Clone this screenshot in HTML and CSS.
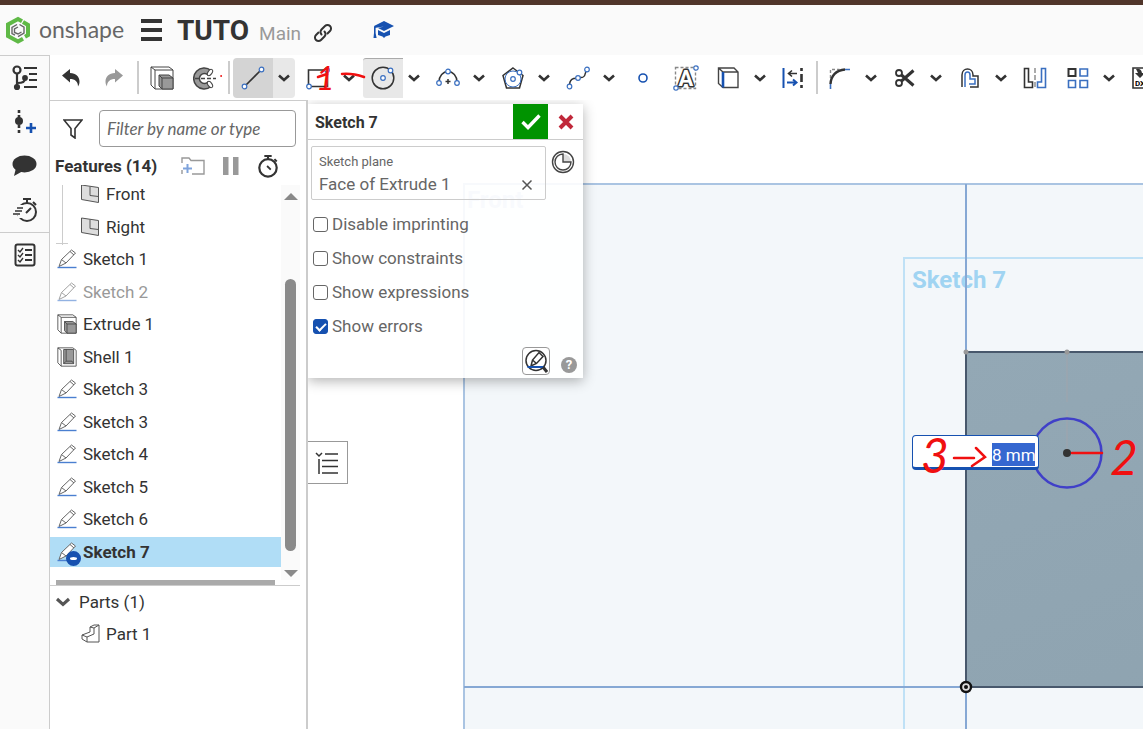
FILE: index.html
```html
<!DOCTYPE html>
<html lang="en">
<head>
    <meta charset="UTF-8">
    <meta name="viewport" content="width=device-width, initial-scale=1.0">
    <title>TUTO | Main</title>
    <link rel="stylesheet" href="styles.css">
</head>
<body>
<!-- shared icons -->
<svg class="defs" aria-hidden="true">
    <symbol id="caret" viewBox="0 0 14 10"><path d="M2 2.500l5 4.500 5-4.500" fill="none" stroke="currentColor" stroke-width="2.600"/></symbol>
    <symbol id="pencil" viewBox="0 0 20 20">
        <path d="M2 17.500l2.500-7L14.500 1l4 3L9 14z M4.500 10.500L9 14M13 2.500l4 3.500" fill="#fff" stroke="#666"/>
        <path d="M0.500 18.500h19" stroke="#4a7fd0" stroke-width="1.400"/>
    </symbol>
    <symbol id="plane" viewBox="0 0 20 20">
        <path d="M1.500 1l17 2.500v15l-17-3z" fill="#ddd" stroke="#555"/>
        <path d="M10 2.500v9l8.500 1" fill="none" stroke="#555"/>
    </symbol>
    <symbol id="cube" viewBox="0 0 24 24">
        <path d="M1 1h18l4 3v19H5l-4-4z" fill="#fff" stroke="#444"/>
        <path d="M1 1l4 3h18M5 4v19" fill="none" stroke="#444"/>
        <path d="M9 9h10l4 3v11H12l-3-3z" fill="#999" stroke="#444"/>
        <path d="M9 9l3 3h11M12 12v11" fill="none" stroke="#444"/>
    </symbol>
    <symbol id="shell" viewBox="0 0 24 24">
        <path d="M1 1h18l4 3v19H5l-4-4z" fill="#fff" stroke="#444"/>
        <path d="M1 1l4 3v19" fill="none" stroke="#444"/>
        <path d="M8 3h12v17H8z" fill="#999" stroke="#444"/>
        <path d="M8 20l3-3h7l2 3M11 17V3" fill="none" stroke="#444"/>
    </symbol>
    <symbol id="stopwatch" viewBox="0 0 24 26">
        <circle cx="12" cy="15" r="9.500" fill="none" stroke="currentColor" stroke-width="2.400"/>
        <path d="M8 2h8M12 2v4M19 5.500l2.500 2.500" stroke="currentColor" stroke-width="2.200"/>
    </symbol>
</svg>

<div class="app">
    <header class="header">
        <a class="logo" href="#">
            <svg width="26" height="28" viewBox="0 0 26 28">
                <path d="M3 14V8.500L13 3l4 2.300" fill="none" stroke="#5fb946" stroke-width="4"/>
                <path d="M18 6l5 3v10l-3 1.700" fill="none" stroke="#5fb946" stroke-width="4"/>
                <path d="M3 13v7l10 5.500 5-2.800" fill="none" stroke="#5fb946" stroke-width="4"/>
                <path d="M12 8.500l-5 3v6l3 1.700M14.500 8.500l4.500 2.700v6l-6 3.500M13 11l-3.500 2v3.500L13 18l3.500-2" fill="none" stroke="#666" stroke-width="1.400"/>
            </svg>
            <span>onshape</span>
        </a>
        <button class="icon-button menu" aria-label="Menu"><i></i><i></i><i></i></button>
        <h1>TUTO</h1>
        <span class="workspace">Main</span>
        <button class="icon-button link" aria-label="Copy link">
            <svg width="20" height="20" viewBox="0 0 20 20" fill="none" stroke="#333" stroke-width="2" stroke-linecap="round">
                <path d="M8.500 11.500a3.600 3.600 0 0 1 0-5L12 3a3.500 3.500 0 0 1 5 5l-2.500 2.500"/>
                <path d="M11.500 8.500a3.600 3.600 0 0 1 0 5L8 17a3.500 3.500 0 0 1-5-5l2.500-2.500"/>
            </svg>
        </button>
        <button class="icon-button learn" aria-label="Learning center">
            <svg width="22" height="19" viewBox="0 0 22 19" fill="#1651b0">
                <path d="M11 0l10 5-10 5-6-3 6-1.500L1.500 7 1 5z"/>
                <path d="M5 9l6 3 6-3v5c-2 1-4 .5-6 3-2-2.500-4-2-6-3z"/>
                <path d="M1 6h1.600v6l1 5H.5l.5-5z"/>
            </svg>
        </button>
    </header>

    <div class="workspace-area">
        <nav class="rail">
            <button class="icon-button" aria-label="Versions and history">
                <svg width="28" height="26" viewBox="0 0 28 26" fill="none" stroke="#333" stroke-width="2.200">
                    <circle cx="6" cy="5" r="3.500"/><path d="M6 9v13M6 18c6 0 8-1 8-5"/>
                    <circle cx="6" cy="22" r="2" fill="#333"/><circle cx="14" cy="13" r="1.800" fill="#333"/>
                    <path d="M13 3h13M18 9h8M18 15h8M13 22h13"/>
                </svg>
            </button>
            <button class="icon-button" aria-label="Insert">
                <svg width="28" height="26" viewBox="0 0 28 26">
                    <path d="M8 1v24" stroke="#333" stroke-width="2.600" stroke-dasharray="3 2"/>
                    <circle cx="8" cy="12" r="4" fill="#333"/>
                    <path d="M15 19h10M20 14v10" stroke="#1651b0" stroke-width="2.600"/>
                </svg>
            </button>
            <button class="icon-button" aria-label="Comments">
                <svg width="28" height="24" viewBox="0 0 28 24"><ellipse cx="13.500" cy="10" rx="12" ry="8.500" fill="#333"/><path d="M5 14l-2 8 9-5z" fill="#333"/></svg>
            </button>
            <button class="icon-button" aria-label="Performance">
                <svg width="28" height="26" viewBox="0 0 28 26" fill="none" stroke="#333" stroke-width="2">
                    <circle cx="16" cy="15" r="9" /><path d="M12 2h8M16 2v4M22 5l3 3M15 16l5-5"/>
                    <path d="M7 10h6M5 13h7M3 16h8M7 19h5" stroke="#fafafa" stroke-width="4"/>
                    <path d="M6 11h6M4 14h7M2 17h7" stroke-width="1.400"/>
                </svg>
            </button>
            <button class="icon-button last" aria-label="Properties">
                <svg width="22" height="24" viewBox="0 0 22 24" fill="none" stroke="#333" stroke-width="2">
                    <rect x="1.500" y="1.500" width="19" height="21" rx="2"/>
                    <path d="M11 7h7M11 12h7M11 17h7"/><path d="M4 7l2 2 3-4M4 12l2 2 3-4M4 17l2 2 3-4" stroke-width="1.400"/>
                </svg>
            </button>
        </nav>

        <div class="main">
            <div class="toolbar">
                <button class="tool" aria-label="Undo"><svg width="18" height="20" viewBox="0 0 18 20"><path d="M0 7.500L8 1v4c6 0 9.500 4 9.500 8.500 0 2-.5 3.500-1.500 5 0-5-3-7.500-8-7.500v3.500z" fill="#333"/></svg></button>
                <button class="tool" aria-label="Redo"><svg width="18" height="20" viewBox="0 0 18 20"><path d="M18 7.500L10 1v4C4 5 .5 9 .5 13.500c0 2 .5 3.500 1.500 5 0-5 3-7.500 8-7.500v3.500z" fill="#999"/></svg></button>
                <span class="sep"></span>
                <button class="tool" aria-label="Extrude"><svg width="24" height="24"><use href="#cube"/></svg></button>
                <button class="tool" aria-label="Revolve">
                    <svg width="24" height="24" viewBox="0 0 24 24">
                        <path d="M18 4.500A10.500 10.500 0 1 0 18 20.500l-3-4.500a5 5 0 1 1 0-7z" fill="#999" stroke="#444" stroke-width="1.500"/>
                        <ellipse cx="17" cy="6.500" rx="2" ry="3.500" transform="rotate(35 17 6.500)" fill="#fff" stroke="#444"/>
                        <ellipse cx="17" cy="18.500" rx="2" ry="3.500" transform="rotate(-35 17 18.500)" fill="#fff" stroke="#444"/>
                        <path d="M2 12.500h21" stroke="#444" stroke-width="1.500" stroke-dasharray="4 2"/>
                    </svg>
                </button>
                <span class="sep"></span>
                <div class="split active">
                    <button class="tool" aria-label="Line"><svg width="24" height="24" viewBox="0 0 24 24"><path d="M4 20L20 4" stroke="#333" stroke-width="1.600"/><g class="pts"><circle cx="3.500" cy="20.500" r="2.300"/><circle cx="20.500" cy="3.500" r="2.300"/></g></svg></button>
                    <button class="drop" aria-label="Line tools"><svg width="14" height="10"><use href="#caret"/></svg></button>
                </div>
                <div class="split">
                    <button class="tool" aria-label="Rectangle"><svg width="24" height="24" viewBox="0 0 24 24"><path d="M2.500 4h19v16.500h-19z" fill="none" stroke="#333" stroke-width="1.600"/><g class="pts"><circle cx="3" cy="20.500" r="2.300"/><circle cx="21" cy="4" r="2.300"/></g></svg></button>
                    <button class="drop" aria-label="Rectangle tools"><svg width="14" height="10"><use href="#caret"/></svg></button>
                </div>
                <div class="split">
                    <button class="tool pressed" aria-label="Circle"><svg width="24" height="24" viewBox="0 0 24 24"><circle cx="12" cy="12" r="10.800" fill="none" stroke="#333" stroke-width="1.500"/><g class="pts"><circle cx="12" cy="12" r="2.300"/><circle cx="19.500" cy="4.500" r="2.300"/></g></svg></button>
                    <button class="drop" aria-label="Circle tools"><svg width="14" height="10"><use href="#caret"/></svg></button>
                </div>
                <div class="split">
                    <button class="tool" aria-label="Arc"><svg width="24" height="24" viewBox="0 0 24 24"><path d="M3 16a9 10.500 0 0 1 18 0M9.500 15.500h5M12 13v5" fill="none" stroke="#333" stroke-width="1.500"/><g class="pts"><circle cx="3" cy="17" r="2.300"/><circle cx="12" cy="5.500" r="2.300"/><circle cx="21" cy="17" r="2.300"/></g></svg></button>
                    <button class="drop" aria-label="Arc tools"><svg width="14" height="10"><use href="#caret"/></svg></button>
                </div>
                <div class="split">
                    <button class="tool" aria-label="Polygon"><svg width="24" height="24" viewBox="0 0 24 24"><path d="M12 2l10 7.500L18.500 22h-13L2 9.500z" fill="none" stroke="#333" stroke-width="1.500"/><circle cx="12" cy="13" r="8" fill="none" stroke="#3a6fc0"/><g class="pts"><circle cx="12" cy="13" r="2.300"/><circle cx="18.500" cy="6.500" r="2.300"/></g></svg></button>
                    <button class="drop" aria-label="Polygon tools"><svg width="14" height="10"><use href="#caret"/></svg></button>
                </div>
                <div class="split">
                    <button class="tool" aria-label="Spline"><svg width="24" height="24" viewBox="0 0 24 24"><path d="M3.500 20C3.500 9 12 14 14 11.500 21 12 18 6 21 4" fill="none" stroke="#333" stroke-width="1.500"/><g class="pts"><circle cx="3.500" cy="20.500" r="2.300"/><circle cx="12" cy="12" r="2.300"/><circle cx="21" cy="3.500" r="2.300"/></g></svg></button>
                    <button class="drop" aria-label="Spline tools"><svg width="14" height="10"><use href="#caret"/></svg></button>
                </div>
                <button class="tool" aria-label="Point"><svg width="24" height="24" viewBox="0 0 24 24"><circle cx="12" cy="12" r="4" fill="none" stroke="#1651b0" stroke-width="1.600"/></svg></button>
                <button class="tool" aria-label="Text">
                    <svg width="26" height="26" viewBox="0 0 26 26">
                        <path d="M2.500 2.500h20v21h-20z" fill="none" stroke="#888" stroke-width="1.400" stroke-dasharray="3 2"/>
                        <text class="text-icon" x="13" y="21" text-anchor="middle">A</text>
                        <g class="pts"><circle cx="3" cy="23" r="2.200"/><circle cx="23" cy="3" r="2.200"/></g>
                    </svg>
                </button>
                <div class="split">
                    <button class="tool" aria-label="Use"><svg width="24" height="24" viewBox="0 0 24 24"><path d="M1.500 2h15.500l4 4v15.500h-15l-4.500-4z M1.500 2l4.500 4h15" fill="none" stroke="#444" stroke-width="1.400"/><path d="M6 6v15.500" stroke="#1651b0" stroke-width="2.600"/></svg></button>
                    <button class="drop" aria-label="Use tools"><svg width="14" height="10"><use href="#caret"/></svg></button>
                </div>
                <button class="tool" aria-label="Dimension"><svg width="24" height="24" viewBox="0 0 24 24" fill="none"><path d="M1.500 2v20M5 16.500h9M11 13.500l3.500 3-3.500 3" stroke="#1651b0" stroke-width="2"/><path d="M19.500 2v3M19.500 8v8M19.500 19v3" stroke="#333" stroke-width="2.600"/><path d="M15 7.500H7M10 4.500l-3.500 3 3.500 3" stroke="#333" stroke-width="1.600"/></svg></button>
                <span class="sep tight"></span>
                <div class="split">
                    <button class="tool" aria-label="Fillet"><svg width="24" height="24" viewBox="0 0 24 24" fill="none"><path d="M2.500 12V3.500h9" stroke="#888" stroke-width="1.400" stroke-dasharray="3 2"/><path d="M2.500 18C3 10 8 4 17 3.500" stroke="#333" stroke-width="2.400"/><path d="M2.500 18v5M17 3.500h5" stroke="#3a6fc0" stroke-width="1.600"/></svg></button>
                    <button class="drop" aria-label="Fillet tools"><svg width="14" height="10"><use href="#caret"/></svg></button>
                </div>
                <div class="split">
                    <button class="tool" aria-label="Trim"><svg width="24" height="24" viewBox="0 0 24 24" fill="none" stroke="#333"><circle cx="6" cy="7" r="3" stroke-width="1.800"/><circle cx="6" cy="17" r="3" stroke-width="1.800"/><path d="M8.500 9l12 10.500M8.500 15L20.500 4.500" stroke-width="3"/></svg></button>
                    <button class="drop" aria-label="Trim tools"><svg width="14" height="10"><use href="#caret"/></svg></button>
                </div>
                <div class="split">
                    <button class="tool" aria-label="Offset"><svg width="24" height="24" viewBox="0 0 24 24" fill="none"><path d="M4 21V9c0-8 11-8 11 0v1h5v11h-8" stroke="#333" stroke-width="1.500"/><path d="M7 21V9c0-4 5-4 5 0v4h5v5h-6" stroke="#3a6fc0" stroke-width="1.500"/></svg></button>
                    <button class="drop" aria-label="Offset tools"><svg width="14" height="10"><use href="#caret"/></svg></button>
                </div>
                <button class="tool" aria-label="Mirror"><svg width="26" height="24" viewBox="0 0 26 24" fill="none"><path d="M2.500 2.500h4V16h4v5.500h-8z" stroke="#333" stroke-width="1.600"/><path d="M23.500 2.500h-4V16h-4v5.500h8z" stroke="#3a6fc0" stroke-width="1.600"/><path d="M13 2v21" stroke="#888" stroke-width="1.400" stroke-dasharray="5 2"/></svg></button>
                <div class="split">
                    <button class="tool" aria-label="Pattern"><svg width="24" height="24" viewBox="0 0 24 24" fill="none" stroke="#3a6fc0" stroke-width="1.600"><path d="M2.500 3h7v7h-7z" stroke="#333" stroke-width="2"/><path d="M14 3h7.500v7H14zM14 14.500h7.500v7H14zM2.500 14.500h7v7h-7z"/></svg></button>
                    <button class="drop" aria-label="Pattern tools"><svg width="14" height="10"><use href="#caret"/></svg></button>
                </div>
                <button class="tool" aria-label="Insert DXF"><svg width="24" height="24" viewBox="0 0 24 24"><path d="M2 22V2h12l8 7v13z" fill="#fff" stroke="#333" stroke-width="1.600"/><path d="M5 3q5-1 6 4h3l-5 5-5-5h3z" fill="#333"/><text class="dxf-icon" x="4" y="20">DXF</text></svg></button>
            </div>

            <div class="content">
                <aside class="features">
                    <div class="filter">
                        <button class="icon-button" aria-label="Filter"><svg width="20" height="20" viewBox="0 0 20 20"><path d="M1 1h18l-7 8.500V19l-4-3V9.500z" fill="none" stroke="#333" stroke-width="1.600"/></svg></button>
                        <input type="text" placeholder="Filter by name or type" aria-label="Filter by name or type">
                    </div>
                    <div class="features-head">
                        <h2>Features (14)</h2>
                        <button class="icon-button" aria-label="New folder"><svg width="24" height="20" viewBox="0 0 24 20"><path d="M1 7V2h7l2 2.500h13V18H11M1 14v4" fill="none" stroke="#999" stroke-width="1.400"/><path d="M2 12.500h9M6.500 8v9" stroke="#7fa3dc" stroke-width="2"/></svg></button>
                        <button class="icon-button" aria-label="Pause"><svg width="16" height="18" viewBox="0 0 16 18"><path d="M0 0h5.500v18H0zM10 0h5.500v18H10z" fill="#999"/></svg></button>
                        <button class="icon-button" aria-label="Rebuild times"><svg width="22" height="24" viewBox="0 0 24 26"><use href="#stopwatch"/><path d="M11 13l4 4" stroke="#333" stroke-width="2"/></svg></button>
                    </div>
                    <div class="scroll-area">
                        <ul class="tree">
                            <li class="child"><svg><use href="#plane"/></svg>Front</li>
                            <li class="child end"><svg><use href="#plane"/></svg>Right</li>
                            <li><svg><use href="#pencil"/></svg>Sketch 1</li>
                            <li class="hidden-item"><svg><use href="#pencil"/></svg>Sketch 2</li>
                            <li><svg><use href="#cube"/></svg>Extrude 1</li>
                            <li><svg><use href="#shell"/></svg>Shell 1</li>
                            <li><svg><use href="#pencil"/></svg>Sketch 3</li>
                            <li><svg><use href="#pencil"/></svg>Sketch 3</li>
                            <li><svg><use href="#pencil"/></svg>Sketch 4</li>
                            <li><svg><use href="#pencil"/></svg>Sketch 5</li>
                            <li><svg><use href="#pencil"/></svg>Sketch 6</li>
                            <li class="selected"><svg><use href="#pencil"/></svg><span class="minus"></span>Sketch 7</li>
                        </ul>
                        <div class="scrollbar"><span class="up"></span><span class="thumb"></span><span class="down"></span></div>
                    </div>
                    <div class="rollback"></div>
                    <div class="parts">
                        <div class="parts-head"><svg width="18" height="12"><use href="#caret"/></svg>Parts (1)</div>
                        <div class="part"><svg width="20" height="20" viewBox="0 0 20 20"><path d="M1 11l8-3V3l4-2h5v17H6l-5-3z" fill="#fff" stroke="#555"/><path d="M1 11l5 2 7-3V4l-4-1M13 4l5-3M6 13v5" fill="none" stroke="#555"/></svg>Part 1</div>
                    </div>
                </aside>

                <main class="canvas">
                    <svg class="scene" width="100%" height="100%">
                        <defs>
                            <linearGradient id="face" x1="0" y1="0" x2="1" y2="1"><stop offset="0" stop-color="#93a8b5"/><stop offset="1" stop-color="#8ca1ae"/></linearGradient>
                        </defs>
                        <rect x="156" y="84" width="100%" height="100%" fill="#f3f7fa"/>
                        <path d="M3000 84H156V1000" class="plane-edge"/>
                        <path d="M596 1000V158H3000" class="sketch-edge"/>
                        <text x="159" y="108" class="label plane-label">Front</text>
                        <text x="604" y="188" class="label sketch-label">Sketch 7</text>
                        <rect x="658" y="252" width="100%" height="335" fill="url(#face)"/>
                        <path d="M658 84V1000M156 587H658" class="axis"/>
                        <path d="M3000 252H658V587H3000" class="face-edge"/>
                        <path d="M759 252V350" stroke="#a0a4ac" stroke-dasharray="50 8"/>
                        <circle cx="658" cy="252" r="2.500" fill="#999"/><circle cx="759" cy="252" r="2.500" fill="#999"/>
                        <circle cx="759" cy="353" r="34.500" class="new-circle"/>
                        <circle cx="759" cy="353" r="4" fill="#333"/>
                        <circle cx="658" cy="587" r="5" fill="#ddd" stroke="#111" stroke-width="2.400"/><circle cx="658" cy="587" r="2" fill="#111"/>
                    </svg>

                    <div class="dimension"><input type="text" value="8 mm" aria-label="Diameter"></div>

                    <button class="panel-toggle" aria-label="Show list">
                        <svg width="24" height="24" viewBox="0 0 24 24" fill="none" stroke="#333" stroke-width="1.500"><path d="M1 2l3 3 3-3M4 8v15M10 3h13M7 9.500h16M7 15.500h16M7 22h16"/></svg>
                    </button>

                    <form class="dialog">
                        <div class="dialog-head">
                            <h3>Sketch 7</h3>
                            <button type="button" class="accept" aria-label="Accept"><svg width="22" height="18" viewBox="0 0 22 18"><path d="M2.500 9l5.500 5.500L19.500 2.500" fill="none" stroke="#fff" stroke-width="3.400"/></svg></button>
                            <button type="button" class="cancel" aria-label="Cancel"><svg width="16" height="16" viewBox="0 0 16 16"><path d="M2 2l12 12M14 2L2 14" stroke="#c0283a" stroke-width="4"/></svg></button>
                        </div>
                        <div class="plane-row">
                            <div class="plane-box">
                                <span class="plane-title">Sketch plane</span>
                                <div class="plane-value">Face of Extrude 1
                                    <button type="button" class="icon-button" aria-label="Remove"><svg width="12" height="12" viewBox="0 0 12 12"><path d="M1.500 1.500l9 9M10.500 1.500l-9 9" stroke="#555" stroke-width="1.500"/></svg></button>
                                </div>
                            </div>
                            <button type="button" class="icon-button" aria-label="Final"><svg width="24" height="24" viewBox="0 0 24 24"><circle cx="12" cy="12" r="10.500" fill="#fff" stroke="#444" stroke-width="1.400"/><path d="M12 4v8h8A8 8 0 0 0 12 4z" fill="#ddd"/><path d="M12 4a8 8 0 1 0 8 8h-8z" fill="#fff" stroke="#444" stroke-width="1.400"/></svg></button>
                        </div>
                        <label><input type="checkbox">Disable imprinting</label>
                        <label><input type="checkbox">Show constraints</label>
                        <label><input type="checkbox">Show expressions</label>
                        <label><input type="checkbox" checked>Show errors</label>
                        <div class="dialog-foot">
                            <button type="button" class="inspect" aria-label="Sketch inspector"><svg width="24" height="24" viewBox="0 0 24 24" fill="none" stroke="#333" stroke-width="1.500"><circle cx="12" cy="11.500" r="10"/><path d="M7 17l1.500-6L15 3.500l4 4-6.500 7zM8.500 11l4 3.500"/><path d="M3.500 18h16" stroke="#1651b0" stroke-width="2"/><path d="M19 18l4 5" stroke-width="3"/></svg></button>
                            <button type="button" class="help" aria-label="Help">?</button>
                        </div>
                    </form>
                </main>
            </div>
        </div>
    </div>

    <!-- tutorial notes drawn over the app -->
    <svg class="notes" width="100%" height="100%">
        <text x="316" y="90" class="note-small">1</text>
        <path d="M318 77l9-3M342 74q10-1 22 3M954 458h20M976 448l9 9-13 9M1072 453h30"/>
        <circle cx="221" cy="76" r="0.500" stroke-width="1"/>
        <text x="921" y="473">3</text>
        <text x="1110" y="475">2</text>
    </svg>
</div>
</body>
</html>
```
FILE: styles.css
```css
* {
    box-sizing: border-box;
}

body {
    margin: 0;
    font-family: Roboto, "Liberation Sans", sans-serif;
    font-size: 16px;
    color: #333;
    background-color: #fff;
}

button {
    font: inherit;
    border: none;
    padding: 0;
    background: none;
    color: inherit;
    cursor: pointer;
}

button svg {
    display: block;
}

h1, h2, h3 {
    margin: 0;
}

.defs {
    position: absolute;
    width: 0;
    height: 0;
}

.app {
    position: relative;
    display: flex;
    flex-direction: column;
    height: 100vh;
    overflow: hidden;
    border-top: 5px solid #50352a;
}

.icon-button {
    display: flex;
    align-items: center;
    justify-content: center;
}

/* header */
.header {
    display: flex;
    align-items: center;
    flex: none;
    height: 50px;
    padding-left: 5px;
    background-color: #fafafa;
}

.logo {
    display: flex;
    align-items: center;
    gap: 8px;
    width: 136px;
    color: #666;
    font-family: Lato, sans-serif;
    font-size: 23px;
    line-height: 28px;
    text-decoration: none;
}

.logo span {
    margin-bottom: 3px;
}

.menu {
    flex-direction: column;
    gap: 5px;
    width: 21px;
    margin-right: 15px;
}

.menu i {
    width: 100%;
    height: 4px;
    background-color: #333;
}

h1 {
    font-size: 28px;
}

.workspace {
    margin: 6px 12px 0 10px;
    font-size: 19px;
    color: #999;
}

.link {
    margin-top: 6px;
}

.learn {
    margin-left: 40px;
}

/* left rail */
.workspace-area {
    display: flex;
    flex: 1;
    min-height: 0;
}

.rail {
    display: flex;
    flex-direction: column;
    align-items: center;
    flex: none;
    width: 50px;
    background-color: #fafafa;
    border-top: 1px solid #ccc;
    border-right: 1px solid #ccc;
}

.rail .icon-button {
    width: 100%;
    height: 44px;
}

.rail .last {
    border-top: 1px solid #ccc;
}

.main {
    display: flex;
    flex-direction: column;
    flex: 1;
    min-width: 0;
}

/* toolbar */
.toolbar {
    display: flex;
    align-items: center;
    flex: none;
    gap: 3px;
    height: 45px;
    padding-left: 1px;
    overflow: hidden;
}

.tool {
    display: flex;
    align-items: center;
    justify-content: center;
    flex: none;
    width: 40px;
    height: 40px;
}

.drop {
    display: flex;
    align-items: center;
    justify-content: center;
    width: 22px;
    height: 40px;
}

.split {
    display: flex;
    flex: none;
}

.active .tool {
    background-color: #d4d4d4;
    border-radius: 4px 0 0 4px;
}

.active .drop {
    background-color: #e8e8e8;
    border-radius: 0 4px 4px 0;
}

.pressed {
    background-color: #e8e8e8;
    border-top: 1px solid #aaa;
    border-radius: 3px 0 0 3px;
}

.sep {
    flex: none;
    width: 2px;
    height: 33px;
    background-color: #ccc;
}

.tight {
    margin: 0 -1px;
}

.pts {
    fill: #fff;
    stroke: #3a6fc0;
    stroke-width: 1.2;
}

.text-icon {
    font: bold 22px Roboto, sans-serif;
    fill: #fff;
    stroke: #333;
    stroke-width: 3;
    stroke-linejoin: round;
    paint-order: stroke;
}

.dxf-icon {
    font-size: 8px;
    font-weight: bold;
}

/* features panel */
.content {
    display: flex;
    flex: 1;
    min-height: 0;
}

.features {
    display: flex;
    flex-direction: column;
    flex: none;
    width: 258px;
    border-top: 1px solid #ccc;
    border-right: 2px solid #ccc;
    font-size: 17px;
}

.filter {
    display: flex;
    align-items: center;
    gap: 16px;
    padding: 9px 10px 0 13px;
}

.filter input {
    flex: 1;
    min-width: 0;
    height: 37px;
    padding: 0 7px;
    border: 1px solid #999;
    border-radius: 4px;
    font-family: Lato, sans-serif;
    font-size: 17px;
    font-style: italic;
}

.filter input::placeholder {
    color: #666;
    font-style: italic;
}

.features-head {
    display: flex;
    align-items: center;
    justify-content: space-between;
    height: 38px;
    padding: 0 27px 0 5px;
}

.features-head h2 {
    width: 108px;
    font-size: 17px;
    white-space: nowrap;
}

.scroll-area {
    display: flex;
    height: 395px;
    overflow: hidden;
}

.tree {
    display: flex;
    flex-direction: column;
    justify-content: space-between;
    flex: 1;
    height: 388px;
    margin: -6px 0 0;
    padding: 0;
    list-style: none;
}

.tree li {
    display: flex;
    align-items: center;
    gap: 6px;
    height: 30px;
    padding-left: 7px;
    position: relative;
}

.tree svg {
    width: 20px;
    height: 20px;
}

.tree .child {
    padding-left: 30px;
}

/* guide line of the open folder */
.child::before {
    content: "";
    position: absolute;
    left: 12px;
    top: 0;
    width: 1px;
    height: 33px;
    background-color: #ccc;
}

.end::after {
    content: "";
    position: absolute;
    left: 6px;
    top: 31px;
    width: 12px;
    height: 1px;
    background-color: #ccc;
}

.tree .hidden-item {
    color: #999;
}

.hidden-item svg {
    opacity: 0.6;
}

.tree .selected {
    background-color: #b0ddf6;
    font-weight: bold;
}

.minus {
    position: absolute;
    left: 16px;
    top: 14px;
    width: 15px;
    height: 15px;
    border: 3px solid #1651b0;
    border-width: 6px 4px;
    border-radius: 8px;
    background-color: #fff;
}

.scrollbar {
    display: flex;
    flex-direction: column;
    align-items: center;
    width: 19px;
    margin-right: 6px;
    background-color: #fafafa;
}

.up, .down {
    border: 7px solid transparent;
}

.up {
    border-top: none;
    border-bottom-color: #888;
    margin: 8px 0 79px;
}

.down {
    border-bottom: none;
    border-top-color: #888;
    margin-top: 19px;
}

.thumb {
    width: 11px;
    height: 272px;
    border-radius: 6px;
    background-color: #8a8a8a;
}

.rollback {
    height: 6px;
    margin-right: 6px;
    border-bottom: 1px solid #ccc;
    background: linear-gradient(#aaa, #aaa) 6px 0 / 219px 5px no-repeat;
}

.parts-head, .part {
    display: flex;
    align-items: center;
    gap: 7px;
    height: 32px;
    padding-left: 4px;
}

.parts-head svg {
    color: #555;
}

.part {
    gap: 5px;
    padding-left: 31px;
}

/* drawing area */
.canvas {
    position: relative;
    flex: 1;
    min-width: 0;
    overflow: hidden;
}

.scene {
    display: block;
}

.plane-edge {
    fill: none;
    stroke: #aac4e2;
    stroke-width: 2;
}

.sketch-edge {
    fill: none;
    stroke: #bfe1f6;
    stroke-width: 2;
}

.axis {
    fill: none;
    stroke: #86a8d4;
    stroke-width: 2;
}

.face-edge {
    fill: none;
    stroke: #48586c;
    stroke-width: 2;
}

.new-circle {
    fill: none;
    stroke: #4040c8;
    stroke-width: 2.5;
}

.label {
    font-size: 24px;
    font-weight: bold;
}

.plane-label {
    fill: #b4c8ea;
}

.sketch-label {
    fill: #a0d4f2;
}

.dimension {
    position: absolute;
    left: 604px;
    top: 335px;
    display: flex;
    justify-content: flex-end;
    width: 127px;
    height: 35px;
    padding: 7px 3px 0;
    border: 1px solid #1651b0;
    border-bottom-width: 3px;
    border-radius: 4px;
    background-color: #fff;
}

.dimension input {
    width: 43px;
    height: 23px;
    padding: 0;
    border: none;
    background-color: #3567d0;
    color: #fff;
    font: 17px Roboto, sans-serif;
    text-align: center;
}

.panel-toggle {
    position: absolute;
    left: -1px;
    top: 341px;
    display: flex;
    align-items: center;
    justify-content: center;
    width: 41px;
    height: 43px;
    border: 1px solid #999;
    border-left: none;
    background-color: #fff;
}

/* sketch dialog */
.dialog {
    position: absolute;
    left: 0;
    top: 4px;
    width: 275px;
    height: 274px;
    background-color: rgba(255, 255, 255, 0.9);
    box-shadow: 0 3px 12px rgba(0, 0, 0, 0.3);
    color: #666;
}

.dialog-head {
    display: flex;
    align-items: center;
    height: 36px;
    border-bottom: 1px solid #ccc;
}

.dialog h3 {
    flex: 1;
    padding: 2px 0 0 7px;
    font-size: 16px;
    color: #333;
}

.accept, .cancel {
    display: flex;
    align-items: center;
    justify-content: center;
    width: 35px;
    height: 35px;
}

.accept {
    background-color: #009300;
}

.plane-row {
    display: flex;
    align-items: flex-start;
    gap: 5px;
    padding: 6px 3px 7px;
}

.plane-row > .icon-button {
    margin-top: 4px;
}

.plane-box {
    width: 235px;
    height: 54px;
    padding: 5px 12px 0 7px;
    border: 1px solid #ccc;
    border-radius: 2px;
}

.plane-title {
    display: block;
    font-size: 13px;
    line-height: 20px;
}

.plane-value {
    display: flex;
    justify-content: space-between;
    font-size: 17px;
    line-height: 25px;
}

.dialog label {
    display: flex;
    align-items: center;
    gap: 4px;
    height: 34px;
    padding-left: 5px;
    font-size: 17px;
}

.dialog label input {
    appearance: none;
    width: 15px;
    height: 15px;
    margin: 0;
    border: 1px solid #666;
    border-radius: 3px;
    background-color: #fff;
}

.dialog label input:checked {
    border-color: #1651b0;
    background-color: #1651b0;
}

.dialog label input:checked::before {
    content: "";
    display: block;
    width: 8px;
    height: 4px;
    margin: 3px 0 0 2px;
    border: solid #fff;
    border-width: 0 0 2px 2px;
    transform: rotate(-45deg);
}

.dialog-foot {
    display: flex;
    align-items: center;
    justify-content: flex-end;
    gap: 11px;
    padding: 4px 6px 0 0;
}

.inspect {
    padding: 1px;
    border: 1px solid #999;
    border-radius: 4px;
    background-color: #fff;
}

.help {
    width: 16px;
    height: 16px;
    margin-top: 8px;
    border-radius: 8px;
    background-color: #999;
    color: #fff;
    font-size: 13px;
    font-weight: bold;
    line-height: 16px;
}

/* red handwritten notes */
.notes {
    position: absolute;
    left: 0;
    top: -5px;
    fill: none;
    stroke: #f01010;
    stroke-width: 2.5;
    stroke-linecap: round;
    pointer-events: none;
}

.notes text {
    font: italic 48px Lato, sans-serif;
    fill: #f01010;
    stroke: none;
}

.notes .note-small {
    font-size: 32px;
}
```
